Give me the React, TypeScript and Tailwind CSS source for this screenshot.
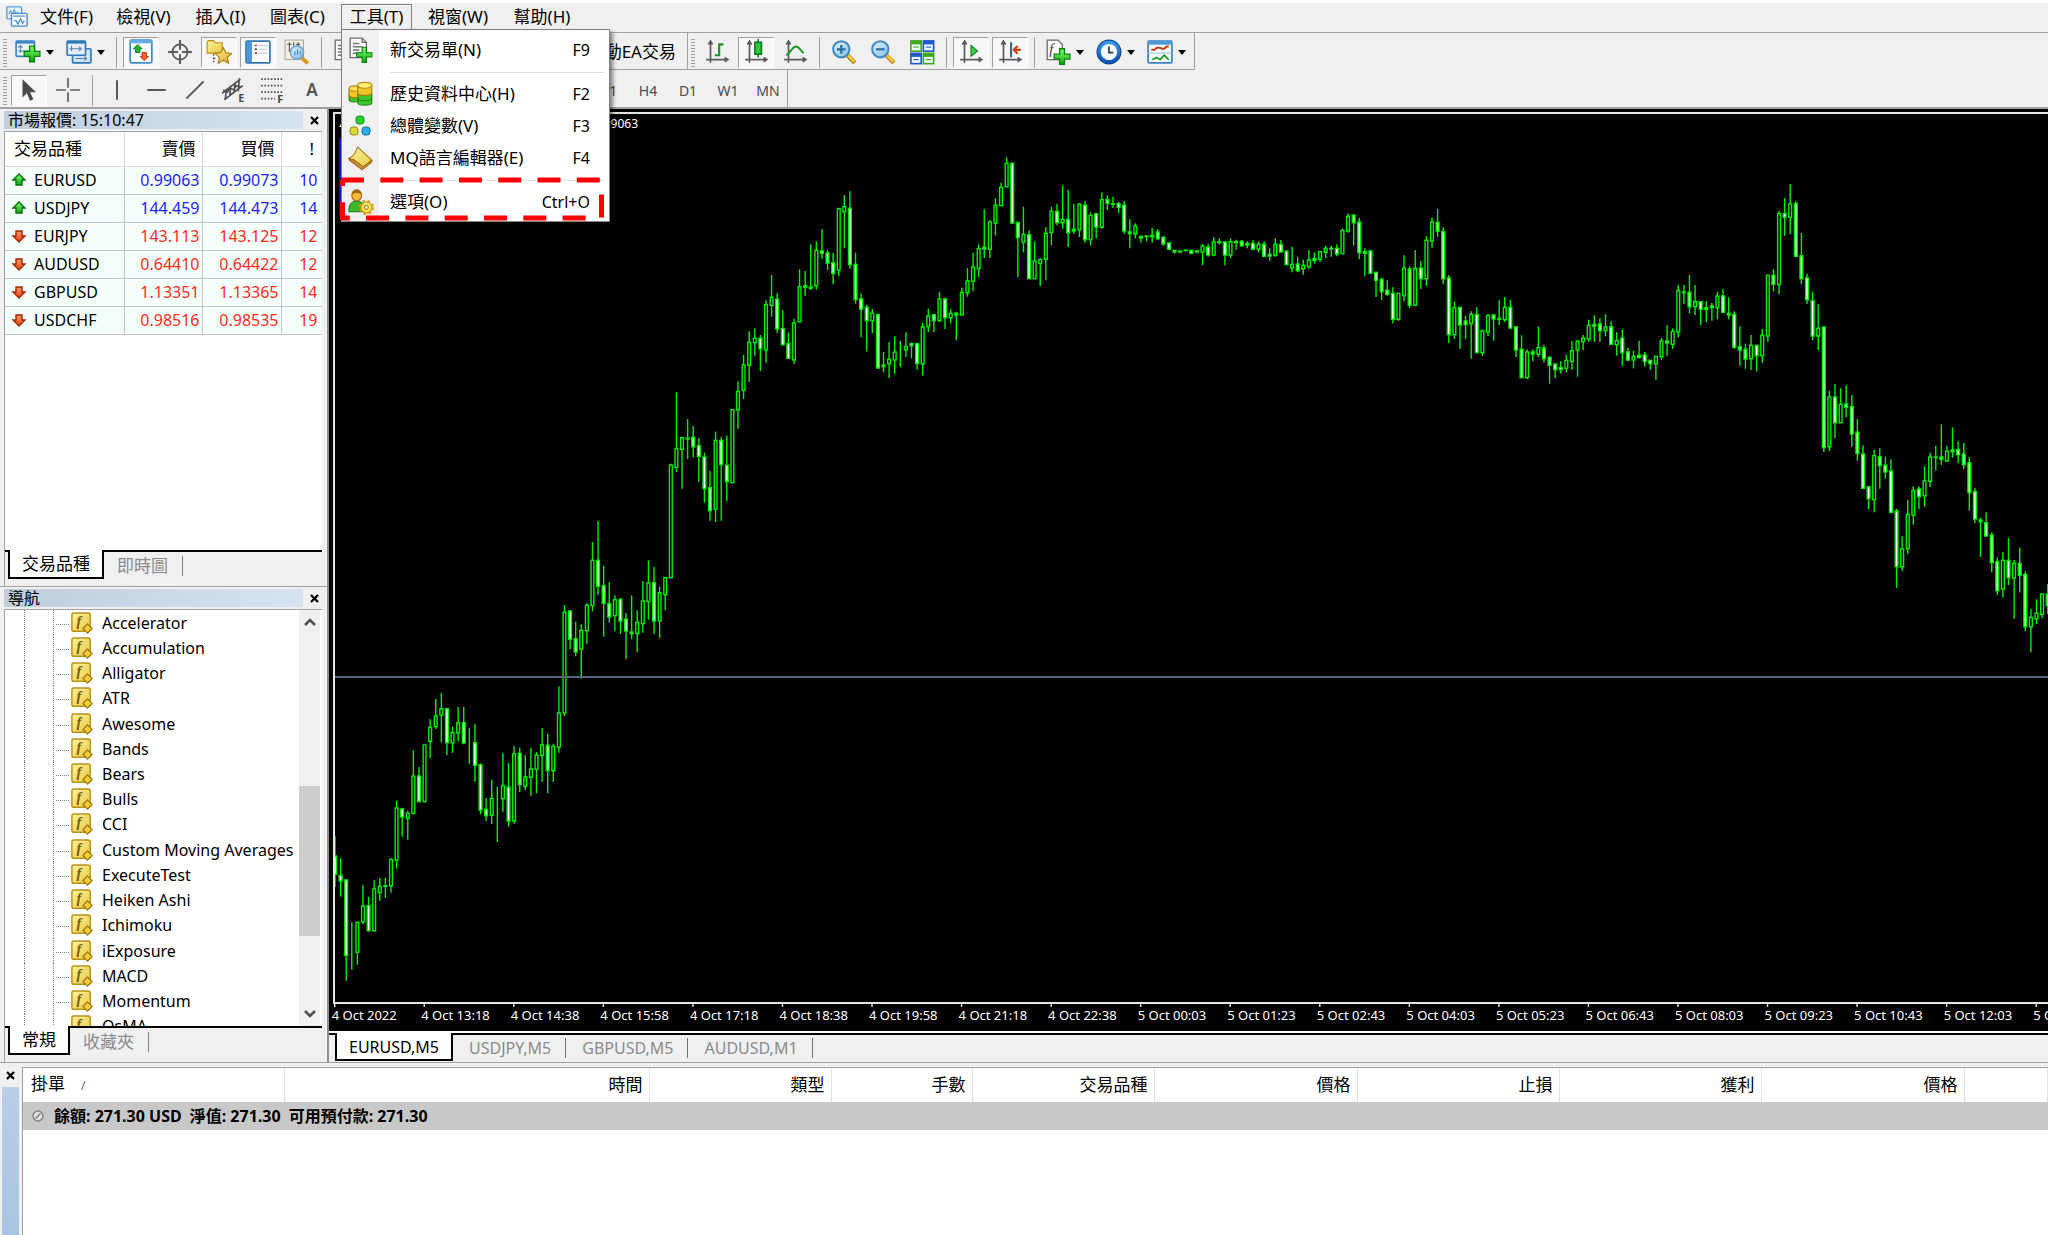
import React from "react";

/* ---------- chart data ---------- */
/* Each bar: high, body top, body bottom, low (thirds of a pixel below the block's origin), 1 = falling bar. */
type Block = { origin: number; bars: string };

const BLOCKS: Block[] = [
  {
    origin: 640,
    bars: `587,648,703,741,1 655,706,723,770,1 720,720,946,1022,1 847,937,937,989,0 845,847,937,975,0 735,798,846,853,0
771,797,872,875,1 721,747,872,875,0 713,739,758,782,0 713,737,739,773,0 655,658,737,758,0 482,504,660,686,0
503,507,531,590,1 512,520,535,599,0 331,408,520,523,0 381,408,485,485,1 315,315,485,485,0 238,262,304,355,0
176,228,260,267,0 159,206,225,308,0 206,206,308,346,1 259,278,308,339,0 201,248,279,304,0 201,248,309,313,1
264,307,307,372,0 252,308,376,426,1 370,374,510,523,1 474,508,527,543,1 419,475,526,552,0 440,475,475,606,0
340,437,476,515,0 369,441,543,560,1 319,341,543,551,0 323,340,434,456,1 344,411,439,451,0 323,387,412,468,0
336,345,388,460,0 264,315,346,426,0 281,316,392,460,1 311,319,392,426,0 139,219,321,338,0`,
  },
  {
    origin: 510,
    bars: `285,307,609,618,0 301,303,388,418,1 335,386,426,439,1 343,361,417,506,0 280,286,362,402,0 96,151,287,304,0
33,151,229,254,1 167,227,280,380,1 217,281,321,338,1 256,269,317,363,0 264,268,333,372,1 310,327,363,448,1
256,366,371,388,1 301,337,371,427,0 213,273,341,368,0 151,219,275,329,0 171,218,333,372,1 230,248,333,384,0
201,203,254,300,0`,
  },
  {
    origin: 180,
    bars: `851,855,1193,1195,0 637,806,862,876,0 771,773,808,926,0 717,774,777,837,1 738,772,800,832,1 775,797,829,905,1
818,831,926,968,1 872,923,992,1022,1 755,781,988,1026,0 771,781,854,1022,1 767,856,905,964,1 688,689,908,909,0
604,634,690,746,0 524,555,631,657,0 453,487,556,606,0 445,475,488,527,0 465,475,506,573,1 361,374,510,548,0
285,352,376,410,0 340,357,447,460,1 390,446,494,497,1 457,491,535,536,1 416,429,540,552,0 268,320,425,427,0
273,317,321,347,1 193,321,325,329,1 184,211,317,329,0 147,213,220,237,1 210,219,249,270,1 218,248,280,313,1
83,86,270,288,0 45,80,95,205,0 34,85,254,266,1 218,253,359,371,1 340,357,388,472,1 374,382,422,514,1
387,400,422,460,0 400,404,564,565,1 516,555,560,577,1 487,538,551,594,0 469,516,540,582,0 482,509,509,560,0
457,500,510,531,0 487,491,497,535,1 488,491,551,569,1 428,441,552,586,0 386,408,440,456,0 403,404,422,456,1
336,357,422,426,0 353,357,413,447,1 387,400,413,430,0 395,400,405,481,1 323,337,405,406,0 264,303,338,350,0
218,261,304,334,0 193,206,266,292,0 88,202,207,234,1 121,126,208,234,0 55,76,129,166,0 8,22,77,78,0
-68,-50,20,22,0 -53,-50,129,132,1 126,127,173,292,1 80,163,187,217,0 151,164,296,297,1 184,243,296,297,0
235,239,250,318,0 142,160,238,301,0 80,94,158,196,0 71,94,128,136,1`,
  },
  {
    origin: 140,
    bars: `136,238,248,266,0 149,238,278,321,1 191,268,273,281,1 190,192,270,291,0 183,196,299,308,1 217,226,299,317,0
220,221,261,295,1 157,179,262,266,0 166,179,190,211,1 170,191,193,204,1 186,191,202,219,1 183,196,273,282,1
238,276,281,325,1 250,258,282,295,0 288,289,294,308,1 287,288,290,304,0 263,286,290,308,1 267,276,296,300,1
288,292,312,317,1 308,309,328,329,1 330,331,336,341,1 329,334,336,337,0 330,330,332,332,0 330,331,340,342,1
329,333,336,337,0 312,318,336,376,0 312,321,345,350,1 292,306,345,346,0 295,305,308,313,0 304,306,345,376,1
295,305,345,354,0 299,305,308,329,0 300,304,317,320,1 304,310,315,325,1 300,310,328,329,1 304,313,328,337,0
304,313,349,350,1 325,343,348,362,1 295,313,346,350,0 300,313,336,337,1 330,334,374,375,1 320,373,384,397,0
350,372,392,396,1 359,376,387,404,0 330,360,380,387,0 338,355,361,371,1 333,335,358,366,0 317,325,337,354,0
317,325,327,350,0 313,325,342,349,1 266,271,341,342,0 220,229,273,278,0 224,225,248,317,1 233,246,338,358,1
325,335,340,409,1 329,333,400,401,1 396,397,421,471,1 413,418,455,480,1 421,451,463,467,1 442,460,538,550,1
459,460,538,543,0 346,385,467,484,0 379,387,496,504,1 330,385,496,497,0 363,384,416,447,1 288,301,416,438,0
233,246,303,325,0 207,247,274,291,1 262,275,416,433,1 405,414,584,609,1 484,503,584,597,0 501,502,555,627,1
527,543,554,597,1 514,523,551,656,0 501,523,638,639,1 568,573,638,648,0 522,527,576,588,0 522,525,537,602,1
480,535,538,555,0 471,502,539,546,0 480,502,564,568,1 559,560,630,652,1 586,628,713,714,1 628,636,713,718,0
628,636,642,664,1 559,623,643,652,0`,
  },
  {
    origin: 170,
    bars: `525,534,566,578,1 559,562,586,641,1 578,583,599,625,1 574,593,599,611,1 555,571,595,607,0 513,542,574,600,0
512,513,540,620,0 495,504,515,541,0 449,466,507,516,0 436,463,469,516,1 445,462,482,516,1 432,471,482,499,0
453,470,523,524,1 487,512,524,557,0 478,504,548,587,1 533,546,570,574,1 542,559,570,595,0 512,556,562,566,1
546,555,575,590,1 570,571,581,599,1 558,559,581,629,0 504,513,560,570,0 465,513,519,557,1 475,484,523,537,0
344,361,486,502,0 345,366,368,402,0 315,367,410,431,1 345,395,410,436,0 394,395,418,465,1 394,413,418,457,1
399,408,413,452,1 365,378,413,448,0 357,378,427,428,1 382,430,435,448,1 424,433,532,536,1 469,530,540,587,1
521,538,567,596,1 495,526,566,600,0 525,526,557,604,1 478,496,557,578,0 315,316,498,515,0 298,316,343,364,1
123,131,344,373,0 84,131,142,197,1 42,102,142,193,0 93,101,259,260,1 189,257,326,343,1 311,324,389,402,1
365,392,498,511,1 403,475,498,541,0 470,471,833,846,1 662,681,830,843,0 642,681,758,805,1 655,703,758,759,0
646,702,712,742,1 675,710,792,830,1 747,786,851,872,1 826,852,955,956,1 949,950,986,1018,1 839,857,989,1027,0
835,860,887,956,1 860,886,906,926,1 868,903,1027,1030,1 1016,1023,1190,1254,1 1099,1137,1190,1203,0 990,1033,1136,1152,0
949,961,1035,1064,0 949,957,980,1018,1 889,933,977,1010,0 848,861,934,951,0 827,861,863,901,0 763,861,868,885,1
827,844,873,875,0 772,840,845,863,1 814,839,854,880,1 818,852,884,897,1 861,878,968,1022,1 953,965,1047,1060,1
1042,1050,1055,1161,1 1027,1058,1098,1099,1 1087,1095,1178,1207,1 1162,1175,1262,1275,1 1146,1171,1257,1283,0
1103,1171,1223,1245,1 1170,1180,1224,1346,0 1133,1180,1216,1267,1 1204,1213,1370,1384,1 1317,1342,1370,1447,0
1288,1330,1346,1362,0 1271,1272,1333,1345,0 1242,1272,1307,1333,1`,
  },
];

const PLOT_TOP = 114;
const BAR_STEP = 5.597;

const BARS = BLOCKS.flatMap(({ origin, bars }) =>
  bars.split(/\s+/).map((bar) => {
    const [high, top, bottom, low, down] = bar.split(",").map(Number);
    const y = (v: number) => origin - PLOT_TOP + v / 3;
    return { high: y(high), top: y(top), bottom: y(bottom), low: y(low), down: down === 1 };
  }),
);

const TIMES = [
  "4 Oct 2022", "4 Oct 13:18", "4 Oct 14:38", "4 Oct 15:58", "4 Oct 17:18", "4 Oct 18:38", "4 Oct 19:58",
  "4 Oct 21:18", "4 Oct 22:38", "5 Oct 00:03", "5 Oct 01:23", "5 Oct 02:43", "5 Oct 04:03", "5 Oct 05:23",
  "5 Oct 06:43", "5 Oct 08:03", "5 Oct 09:23", "5 Oct 10:43", "5 Oct 12:03", "5 Oct 13:23",
];

/* ---------- icons ---------- */
type IconProps = { size?: number; children: React.ReactNode };
const Icon = ({ size = 26, children }: IconProps) => (
  <svg width={size} height={size} viewBox="0 0 24 24" fill="none" aria-hidden="true" className="shrink-0">
    {children}
  </svg>
);

const Defs = () => (
  <svg width="0" height="0" className="absolute" aria-hidden="true">
    <defs>
      <linearGradient id="green" x1="0" y1="0" x2="0" y2="1">
        <stop offset="0" stopColor="#7dff6a" />
        <stop offset="1" stopColor="#0aa814" />
      </linearGradient>
      <linearGradient id="gold" x1="0" y1="0" x2="1" y2="1">
        <stop offset="0" stopColor="#fff6a8" />
        <stop offset="1" stopColor="#dfa514" />
      </linearGradient>
      <linearGradient id="leaf" x1="0" y1="0" x2="1" y2="1">
        <stop offset="0" stopColor="#fdf3a0" />
        <stop offset="1" stopColor="#e9c840" />
      </linearGradient>
      <linearGradient id="lens" x1="0" y1="0" x2="1" y2="1">
        <stop offset="0" stopColor="#e8f6ff" />
        <stop offset="1" stopColor="#7fbde8" />
      </linearGradient>
      <linearGradient id="blue" x1="0" y1="0" x2="0" y2="1">
        <stop offset="0" stopColor="#3aa0f4" />
        <stop offset="1" stopColor="#0a4fae" />
      </linearGradient>
      <linearGradient id="red" x1="0" y1="0" x2="0" y2="1">
        <stop offset="0" stopColor="#ff9a6a" />
        <stop offset="1" stopColor="#e03a08" />
      </linearGradient>
    </defs>
  </svg>
);

const PLUS = "M13 9.500h4v5h5v4h-5v5h-4v-5h-5v-4h5z";
const Plus = () => <path d={PLUS} fill="url(#green)" stroke="#07820f" />;
const BIG_PLUS = "M13.500 6.500h4.500v5h5v4.500h-5v5h-4.500v-5h-5v-4.500h5z";

const AppLogo = () => (
  <Icon size={22}>
    <rect x="1" y="1" width="16" height="13" rx="1" fill="#eaf4fd" stroke="#5b9bd8" strokeWidth="1.500" />
    <path d="M3 9l2-4 2 5 2-6 2 5 2-3" stroke="#5b9bd8" strokeWidth="1.300" />
    <rect x="6" y="8" width="17" height="14" rx="1" fill="#f4faff" stroke="#4a8cd0" strokeWidth="1.500" />
    <path d="M8 11h13" stroke="#4a8cd0" strokeWidth="1.300" />
    <path d="M9 16h2l2 4 3-6 2 5 2-3" stroke="#4a8cd0" strokeWidth="1.400" />
  </Icon>
);
const NewChart = () => (
  <Icon>
    <rect x="1" y="2" width="17" height="14" rx="1" fill="#e9f4fc" stroke="#3c84c4" strokeWidth="1.500" />
    <path d="M1 3h17" stroke="#3c84c4" strokeWidth="2.500" />
    <path d="M5 6v7M3 8l2-2 2 2M3 11h11" stroke="#5580a8" />
    <path d={BIG_PLUS} fill="url(#green)" stroke="#07820f" strokeWidth="1.200" />
  </Icon>
);
const Profiles = () => (
  <Icon>
    <rect x="6" y="9" width="17" height="13" rx="1" fill="#cfe4f6" stroke="#2f78b8" strokeWidth="1.500" />
    <path d="M9 18h10M17 16l2 2-2 2" stroke="#5580a8" />
    <rect x="1" y="2" width="17" height="13" rx="1" fill="#e3f0fb" stroke="#2f78b8" strokeWidth="1.500" />
    <path d="M1 3h17" stroke="#2f78b8" strokeWidth="2.500" />
    <path d="M5 6v5M3 9h11M12 7l2 2-2 2" stroke="#5580a8" />
  </Icon>
);
const MarketWatchIcon = () => (
  <Icon>
    <rect x="2" y="1" width="20" height="21" rx="1.500" fill="#fdfeff" stroke="#3c8ccc" strokeWidth="1.600" />
    <path d="M2 2.500h20" stroke="#62aee6" strokeWidth="3" />
    <path d="M9 5l4 4h-2v3.500H7V9H5z" fill="#28b428" stroke="#0b7a10" strokeWidth=".8" />
    <path d="M15 20l-4-4h2v-3.500h4V16h2z" fill="#f4602a" stroke="#b83208" strokeWidth=".8" />
  </Icon>
);
const Crosshair = () => (
  <Icon>
    <circle cx="12" cy="12" r="7" stroke="#5a5a5a" strokeWidth="1.600" />
    <path d="M12 1v9M12 14v9M1 12h9M14 12h9" stroke="#5a5a5a" strokeWidth="1.800" />
  </Icon>
);
const FolderStar = () => (
  <Icon>
    <path d="M1 3.500l1-2h5l1.500 2H15V13H1z" fill="url(#leaf)" stroke="#b98a12" />
    <path d="M7 14v8M7 18h3" stroke="#444" strokeWidth="1.300" strokeDasharray="1.500 1.500" />
    <path d="M16 8l2.400 4.800 5.200.6-3.900 3.600 1.100 5.300L16 19.700l-4.800 2.600 1.100-5.300-3.900-3.600 5.200-.6z" fill="url(#gold)" stroke="#a87808" />
  </Icon>
);
const NavigatorIcon = () => (
  <Icon>
    <rect x="1" y="2" width="22" height="20" rx="1" fill="#fff" stroke="#2f78b8" strokeWidth="1.600" />
    <rect x="1.500" y="2.500" width="5" height="19" fill="#4b98d8" />
    <path d="M9 6h2M9 13h2" stroke="#e02020" strokeWidth="1.600" />
    <path d="M9 9.500h2" stroke="#333" strokeWidth="1.600" />
    <path d="M12.500 6H21M12.500 9.500H21M12.500 13H21" stroke="#c4d8ea" strokeWidth="1.200" />
  </Icon>
);
const Tester = () => (
  <Icon>
    <rect x="1" y="1" width="17" height="18" fill="#f2efe6" stroke="#b4aa94" />
    <path d="M5 3v9M3 5h4M9 3v5M13 3v6M11 5h4" stroke="#666" strokeWidth="1.200" />
    <path d="M16 17l6 5.500" stroke="#d59a12" strokeWidth="3.500" />
    <circle cx="12" cy="12.500" r="6" fill="url(#lens)" stroke="#6ba4cf" strokeWidth="1.500" />
    <path d="M10 11v4M12.500 9.500v5M15 11v3" stroke="#4a86b4" />
  </Icon>
);
const NewOrder = () => (
  <Icon>
    <path d="M2 1h11l4 4v14H2z" fill="#fbfbfb" stroke="#6a6a6a" strokeWidth="1.200" />
    <path d="M13 1v4h4" stroke="#6a6a6a" strokeWidth="1.200" />
    <path d="M4.500 6h6M4.500 9h9M4.500 12h6M4.500 15h4" stroke="#777" strokeWidth="1.500" />
    <Plus />
  </Icon>
);
const Axes = () => (
  <path d="M6 2v20M2 19h20M4 5l2-3 2 3M19 17l3 2-3 2" stroke="#5c5c5c" strokeWidth="1.600" />
);
const BarsIcon = () => (
  <Icon>
    <Axes />
    <path d="M14 4v12M14 5h4M10 15h4" stroke="#149420" strokeWidth="2" />
  </Icon>
);
const CandlesIcon = () => (
  <Icon>
    <Axes />
    <path d="M14 0v17" stroke="#0c7a18" strokeWidth="1.500" />
    <rect x="11" y="3" width="6" height="11" fill="#30c840" stroke="#0c7a18" strokeWidth="1.500" />
  </Icon>
);
const LineIcon = () => (
  <Icon>
    <Axes />
    <path d="M4 15c4-3 6-8 9-8s4 4 7 6" stroke="#149420" strokeWidth="1.800" />
  </Icon>
);
const ZoomIcon = ({ plus }: { plus?: boolean }) => (
  <Icon>
    <path d="M15 15l7 7" stroke="#b98508" strokeWidth="4" />
    <path d="M15.500 15l6 6" stroke="#f6d24a" strokeWidth="2" />
    <circle cx="9.500" cy="9.500" r="7.500" fill="url(#lens)" stroke="#3f85c0" strokeWidth="1.800" />
    <path d={plus ? "M5.500 9.500h8M9.500 5.500v8" : "M5.500 9.500h8"} stroke="#2c6a9e" strokeWidth="2" />
  </Icon>
);
const TileIcon = () => (
  <Icon>
    {[
      [1, 1, "#3fa81c"],
      [12.5, 1, "#2458c8"],
      [1, 12.5, "#2458c8"],
      [12.5, 12.5, "#3fa81c"],
    ].map(([x, y, c]) => (
      <g key={`${x}-${y}`} transform={`translate(${x} ${y})`}>
        <rect width="11" height="11" fill={c as string} />
        <rect x="1.500" y="4" width="8" height="5.500" fill="#eef6ff" />
        <path d="M3 6.500h5" stroke={c as string} />
      </g>
    ))}
  </Icon>
);
const AutoScroll = () => (
  <Icon>
    <Axes />
    <path d="M12 6l6 5-6 5z" fill="#3fd04c" stroke="#0c7a18" />
  </Icon>
);
const ShiftIcon = () => (
  <Icon>
    <Axes />
    <path d="M13 3v14" stroke="#44648a" strokeWidth="2" />
    <path d="M22 10h-6M19 6.500L15.500 10l3.500 3.500" stroke="#c8420e" strokeWidth="2" />
  </Icon>
);
const IndicatorsIcon = () => (
  <Icon>
    <path d="M2 1h10l4 4v14H2z" fill="#fbfbfb" stroke="#6a6a6a" strokeWidth="1.200" />
    <text x="4" y="14" fontSize="13" fontStyle="italic" fontFamily="Liberation Serif, serif" fill="#333">f</text>
    <path d={BIG_PLUS} transform="translate(0 2.500)" fill="url(#green)" stroke="#07820f" strokeWidth="1.200" />
  </Icon>
);
const ClockIcon = () => (
  <Icon>
    <circle cx="12" cy="12" r="11" fill="url(#blue)" stroke="#0a3f8c" />
    <circle cx="12" cy="12" r="7.500" fill="#f2f8ff" />
    <path d="M12 7v5.500h4" stroke="#333" strokeWidth="1.600" />
  </Icon>
);
const TemplateIcon = () => (
  <Icon>
    <rect x="1" y="2" width="22" height="20" rx="1" fill="#f8fbfe" stroke="#3c84c4" strokeWidth="1.600" />
    <path d="M1 3.500h22" stroke="#4b98d8" strokeWidth="3.500" />
    <path d="M4 10h3l2-2h3l2 1h2l2-2h2" stroke="#b83a10" strokeWidth="1.800" />
    <path d="M1 13h22" stroke="#9cc4e6" />
    <path d="M5 19l4-2 3 2 4-4 4 4" stroke="#149420" strokeWidth="1.500" />
  </Icon>
);
const Cursor = () => (
  <Icon>
    <path d="M6 2v17l4-4 3 7 3-1.500-3-6.500h5.500z" fill="#4a4a4a" />
  </Icon>
);
const Cross = () => (
  <Icon>
    <path d="M12 1v9M12 14v9M1 12h9M14 12h9" stroke="#5a5a5a" strokeWidth="1.500" />
  </Icon>
);
const Stroke = ({ d }: { d: string }) => (
  <Icon>
    <path d={d} stroke="#555" strokeWidth="1.800" />
  </Icon>
);
const Channel = () => (
  <Icon>
    <path d="M1 15L18 2M3 21L20 8M5 11l-1 9M9 8l-1 10M13 5l-1 10M17 1l-1 12M2 12l4 2 2-4 4 2 2-4 4 1" stroke="#505050" strokeWidth="1.500" />
    <text x="16" y="23" fontSize="10" fontWeight="700" fontFamily="Noto Sans, sans-serif" fill="#444">E</text>
  </Icon>
);
const Fibo = () => (
  <Icon>
    <path d="M1 2h21M1 8h21M1 14h21M1 20h13" stroke="#555" strokeWidth="1.500" strokeDasharray="1.500 1.500" />
    <text x="16" y="24" fontSize="10" fontWeight="700" fontFamily="Noto Sans, sans-serif" fill="#444">F</text>
  </Icon>
);
const Database = () => (
  <Icon>
    <path d="M9 12v8c0 3 13 3 13 0v-8z" fill="#3fc62c" stroke="#1c8412" />
    <path d="M9 16c0 3 13 3 13 0" stroke="#1c8412" />
    <path d="M1 13v4c0 2 4 3 8 2v-6z" fill="#3fc62c" stroke="#1c8412" />
    <path d="M1 7v6c0 2 4 3 8 2V7z" fill="#f0c626" stroke="#a87808" />
    <ellipse cx="7" cy="7" rx="6" ry="2.500" fill="#ffe95a" stroke="#b98a12" />
    <path d="M9 4v7c0 3 13 3 13 0V4z" fill="#f0c626" stroke="#a87808" />
    <ellipse cx="15.500" cy="4" rx="6.500" ry="2.700" fill="#fff07a" stroke="#b98a12" />
  </Icon>
);
const Globals = () => (
  <Icon size={24}>
    <rect x="8" y="2" width="8" height="8" rx="3" fill="#22d622" stroke="#0c8a18" />
    <rect x="2" y="13" width="8" height="8" rx="3" fill="#d8d83c" stroke="#8c8c14" />
    <rect x="14" y="13" width="8" height="8" rx="3" fill="#2ab0e8" stroke="#126a9c" />
  </Icon>
);
const Editor = () => (
  <Icon>
    <path d="M9 2l13 12-9 8L1 12c3 0 6-5 8-10z" fill="url(#leaf)" stroke="#a4701a" />
    <path d="M1 12c1 2 2 2 4 1l9 7 8-6v2l-9 7L1 14z" fill="#c98a2c" stroke="#8c5a10" strokeWidth=".8" />
  </Icon>
);
const Options = () => (
  <Icon>
    <path d="M1 21c-1-7 3-10 7-10s8 3 7 10z" fill="#3fb82c" stroke="#1c7a12" />
    <ellipse cx="8" cy="6" rx="4.500" ry="5" fill="#f4b83c" stroke="#9c6408" />
    <path d="M3.500 5c0-6 9-6 9 0-3-2-6-2-9 0z" fill="#a0620c" />
    <circle cx="17" cy="17" r="5.800" stroke="#d49c10" strokeWidth="2.400" strokeDasharray="2.300 2.300" />
    <circle cx="17" cy="17" r="5" fill="#ffe860" stroke="#c89810" strokeWidth="1" />
    <circle cx="17" cy="17" r="1.800" fill="#fff" stroke="#a87808" />
  </Icon>
);
const FnIcon = () => (
  <Icon size={22}>
    <rect x="1" y="1" width="20" height="20" rx="2" fill="url(#leaf)" stroke="#b8921c" strokeWidth="1.600" />
    <text x="6" y="15" fontSize="16" fontWeight="700" fontStyle="italic" fontFamily="Liberation Serif, serif" fill="#7a5a08">f</text>
    <path d="M18 13l5 5-5 5-5-5z" fill="#f6cc3a" stroke="#9c7408" strokeWidth="1.300" />
  </Icon>
);
const Trend = ({ up }: { up: boolean }) => (
  <svg width="16" height="14" viewBox="0 0 16 14" aria-hidden="true" className="shrink-0">
    <path
      d={up ? "M8 1l6 6h-3v5H5V7H2z" : "M8 13L2 7h3V2h6v5h3z"}
      fill={up ? "url(#green)" : "url(#red)"}
      stroke={up ? "#0a6a10" : "#9c2a06"}
      strokeWidth="1.400"
    />
  </svg>
);

/* ---------- toolbar pieces ---------- */
const Grip = () => (
  <span className="mr-px ml-[3px] h-[30px] w-1 bg-[repeating-linear-gradient(0deg,#9d9d9d_0_1px,#f0f0f0_1px_3px)]" />
);
const Rule = () => <span className="mx-[3px] h-[31px] w-px bg-[#a0a0a0]" />;

const Tool = ({ label, pressed, children }: { label: string; pressed?: boolean; children: React.ReactNode }) => (
  <button
    type="button"
    aria-label={label}
    aria-pressed={pressed}
    className={
      pressed
        ? "flex h-[31px] w-9 shrink-0 items-center justify-center border border-t-[#a0a0a0] border-r-white border-b-white border-l-[#a0a0a0] bg-[#f8f8f8]"
        : "flex h-[31px] w-9 shrink-0 items-center justify-center"
    }
  >
    {children}
  </button>
);
const DropTool = ({ label, children }: { label: string; children: React.ReactNode }) => (
  <button type="button" aria-label={label} className="flex h-[31px] w-12 shrink-0 items-center gap-[5px] pl-1">
    {children}
    <svg width="8" height="5" viewBox="0 0 8 5" aria-hidden="true">
      <path d="M0 0h8L4 5z" fill="#000" />
    </svg>
  </button>
);

/* ---------- menu ---------- */
const MenuItem = ({ icon, label, keys }: { icon: React.ReactNode; label: string; keys: string }) => (
  <button type="button" role="menuitem" className="flex h-8 w-full items-center pr-[19px] pl-[6px]">
    <span className="w-[42px]">{icon}</span>
    <span className="flex-1 text-left">{label}</span>
    <span className="text-[16px]">{keys}</span>
  </button>
);
const MenuRule = () => (
  <div className="flex h-3 items-center pr-1 pl-12">
    <span className="h-px w-full bg-[#e2e2e2]" />
  </div>
);

const ToolsMenu = () => (
  <div
    role="menu"
    className="absolute top-full -left-px z-20 w-[269px] border border-[#808080] bg-[linear-gradient(to_right,#f0f0f0_37px,#fff_37px)] pt-1 pb-[3px] shadow-[3px_3px_4px_rgba(0,0,0,0.45)]"
  >
    <MenuItem icon={<NewOrder />} label="新交易單(N)" keys="F9" />
    <MenuRule />
    <MenuItem icon={<Database />} label="歷史資料中心(H)" keys="F2" />
    <MenuItem icon={<Globals />} label="總體變數(V)" keys="F3" />
    <MenuItem icon={<Editor />} label="MQ語言編輯器(E)" keys="F4" />
    <MenuRule />
    <MenuItem icon={<Options />} label="選項(O)" keys="Ctrl+O" />
    <svg className="pointer-events-none absolute bottom-0 -left-[2px]" width="266" height="44" aria-hidden="true">
      <path d="M1 3H261.500V41H2.500V3" fill="none" stroke="#f00" strokeWidth="5" strokeDasharray="23 16.300" />
    </svg>
  </div>
);

const MenuBar = () => (
  <nav className="mb-[2px] flex h-[27px] shrink-0 items-center pl-[6px] text-[17px] leading-5">
    <AppLogo />
    {["文件(F)", "檢視(V)", "插入(I)", "圖表(C)"].map((m) => (
      <button key={m} type="button" className="min-w-[77px]">
        {m}
      </button>
    ))}
    <div className="relative mt-px mr-1 ml-[5px] flex h-[25px] w-[71px] justify-center self-start border border-b-0 border-[#808080]">
      <button type="button" aria-expanded="true">工具(T)</button>
      <ToolsMenu />
    </div>
    {["視窗(W)", "幫助(H)"].map((m) => (
      <button key={m} type="button" className="min-w-[84px]">
        {m}
      </button>
    ))}
  </nav>
);

/* ---------- side panels ---------- */
const QUOTES = [
  ["EURUSD", "0.99063", "0.99073", "10", true],
  ["USDJPY", "144.459", "144.473", "14", true],
  ["EURJPY", "143.113", "143.125", "12", false],
  ["AUDUSD", "0.64410", "0.64422", "12", false],
  ["GBPUSD", "1.13351", "1.13365", "14", false],
  ["USDCHF", "0.98516", "0.98535", "19", false],
] as const;

const INDICATORS = [
  "Accelerator", "Accumulation", "Alligator", "ATR", "Awesome", "Bands", "Bears", "Bulls", "CCI",
  "Custom Moving Averages", "ExecuteTest", "Heiken Ashi", "Ichimoku", "iExposure", "MACD", "Momentum", "OsMA",
];

const CloseButton = ({ label }: { label: string }) => (
  <button type="button" aria-label={label} className="flex w-4 items-center justify-center">
    <svg width="9" height="9" viewBox="0 0 9 9" aria-hidden="true">
      <path d="M1 1l7 7M8 1L1 8" stroke="#000" strokeWidth="2.200" />
    </svg>
  </button>
);

const PanelTitle = ({ text }: { text: string }) => (
  <header className="flex h-[22px] shrink-0 items-center justify-between">
    <h2 className="flex h-[18px] w-[299px] items-center bg-linear-to-r from-[#bfcddc] to-[#d6e4f2] pl-1 text-[16px] leading-4">
      {text}
    </h2>
    <CloseButton label={`關閉 ${text}`} />
  </header>
);

const Tabs = ({ active, other }: { active: string; other: string }) => (
  <div role="tablist" className="flex h-[30px] shrink-0 items-start border-t-2 border-black pl-[3px] text-[17px] leading-6">
    <button type="button" role="tab" aria-selected="true" className="-mt-[2px] h-[29px] border-2 border-t-0 border-black bg-white px-3">
      {active}
    </button>
    <button type="button" role="tab" aria-selected="false" className="mt-1 ml-[5px] border-r border-[#808080] px-2 pr-[14px] leading-5 text-[#8a8a8a]">
      {other}
    </button>
  </div>
);

const MarketWatch = () => (
  <section className="flex h-[477px] shrink-0 flex-col pr-[5px] pl-1">
    <PanelTitle text="市場報價: 15:10:47" />
    <div className="flex-1 border-t border-l border-[#a0a0a0] bg-white">
      <table className="w-full table-fixed border-collapse text-[16px] leading-5">
        <colgroup>
          <col className="w-[119px]" />
          <col className="w-[78px]" />
          <col className="w-[79px]" />
          <col />
        </colgroup>
        <thead>
          <tr className="h-[34px] text-[17px] [&>th]:border-r [&>th]:border-b [&>th]:border-[#dcdcdc] [&>th]:font-normal">
            <th className="pl-[9px] text-left">交易品種</th>
            <th className="pr-[6px] text-right">賣價</th>
            <th className="pr-[6px] text-right">買價</th>
            <th className="pr-[7px] text-right">!</th>
          </tr>
        </thead>
        <tbody>
          {QUOTES.map(([symbol, bid, ask, spread, up]) => (
            <tr
              key={symbol}
              className={
                up
                  ? "h-7 bg-[#f5fffa] text-[#1c1cff] [&>td]:border [&>td]:border-[#c4c4c4]"
                  : "h-7 bg-[#f5fffa] text-[#ff2a1c] [&>td]:border [&>td]:border-[#c4c4c4]"
              }
            >
              <td className="border-l-0! pl-[6px] text-black">
                <span className="flex items-center gap-[7px]">
                  <Trend up={up} />
                  {symbol}
                </span>
              </td>
              <td className="pr-[2px] text-right">{bid}</td>
              <td className="pr-[2px] text-right">{ask}</td>
              <td className="border-r-0! pr-1 text-right">{spread}</td>
            </tr>
          ))}
        </tbody>
      </table>
    </div>
    <div className="border-l border-[#a0a0a0] pb-[6px]">
      <Tabs active="交易品種" other="即時圖" />
    </div>
  </section>
);

const Chevron = ({ d }: { d: string }) => (
  <svg width="12" height="8" viewBox="0 0 12 8" fill="none" aria-hidden="true">
    <path d={d} stroke="#505050" strokeWidth="2.600" />
  </svg>
);

const Navigator = () => (
  <section className="flex min-h-0 flex-1 flex-col border-t border-[#a0a0a0] pr-[5px] pl-1">
    <PanelTitle text="導航" />
    <div className="flex min-h-0 flex-1 overflow-hidden border-t border-l border-[#a0a0a0] bg-white">
      <ul className="flex h-[429px] flex-1 flex-col pl-[19px] text-[16px] leading-5">
        {INDICATORS.map((name) => (
          <li key={name} className="flex flex-1 items-center border-l border-dotted border-[#808080] pl-7 whitespace-nowrap">
            <span className="flex items-center self-stretch border-l border-dotted border-[#808080]">
              <span className="mt-[3px] mr-[2px] ml-[2px] w-[13px] border-t border-dotted border-[#808080]" />
              <FnIcon />
            </span>
            <span className="ml-[9px]">{name}</span>
          </li>
        ))}
      </ul>
      <div className="flex w-[21px] shrink-0 flex-col items-center bg-[#f0f0f0] py-2">
        <Chevron d="M1 7l5-5 5 5" />
        <span className="mt-[160px] h-[150px] w-full bg-[#cdcdcd]" />
        <span className="flex-1" />
        <Chevron d="M1 1l5 5 5-5" />
      </div>
      <span className="w-[2px]" />
    </div>
    <div className="border-l border-[#a0a0a0] pb-[6px]">
      <Tabs active="常規" other="收藏夾" />
    </div>
  </section>
);

/* ---------- chart ---------- */
const Chart = () => (
  <div className="flex min-h-0 flex-1 flex-col bg-black pt-[3px] text-white">
    <div className="relative ml-1 min-h-0 flex-1 overflow-hidden border-t-2 border-l-2 border-[#e4e4e4]">
      <svg className="absolute inset-0 h-full w-full" role="img" aria-label="EURUSD,M5">
        <g>
          {BARS.map((b, i) => {
            const x = BAR_STEP * i;
            const h = b.bottom - b.top;
            return (
              <g key={i} stroke="#00f000" strokeWidth="1.400">
                <path d={`M${x} ${b.high}V${b.low}`} />
                <rect x={x - 1.4} y={b.top} width="2.800" height={h} fill={b.down ? "#fff" : "#000"} />
              </g>
            );
          })}
        </g>
        <path d="M0 563H4000" stroke="#56677a" strokeWidth="2" />
      </svg>
      <div className="absolute top-0 left-0 flex w-[303px] items-center justify-between pl-1 text-[12px] leading-5">
        <svg width="8" height="6" viewBox="0 0 8 6" aria-hidden="true">
          <path d="M4 0l4 6H0z" fill="#fff" />
        </svg>
        <span>EURUSD,M5 0.99063 0.99065 0.99060 0.99063</span>
      </div>
      <div className="absolute top-6 left-1 h-[78px] w-[200px] bg-[#1010d0]" />
    </div>
    <svg className="h-[29px] w-full shrink-0" aria-hidden="true">
      <path d="M4 1H4000" stroke="#e4e4e4" strokeWidth="2" />
      {TIMES.map((t, i) => (
        <g key={t} transform={`translate(${5.7 + i * BAR_STEP * 16} 0)`}>
          <path d="M0 0V5" stroke="#e4e4e4" strokeWidth="1.400" />
          <text x="-3" y="18" fontSize="13" fill="#fff">
            {t}
          </text>
        </g>
      ))}
    </svg>
  </div>
);

const ChartTabs = () => (
  <div className="shrink-0 border-t-2 border-white">
    <div role="tablist" className="flex h-[29px] items-start border-t-2 border-black pl-[6px] text-[16px] leading-6">
      <button type="button" role="tab" aria-selected="true" className="-mt-[2px] h-7 w-[118px] border-2 border-t-0 border-black bg-white pt-px">
        EURUSD,M5
      </button>
      {["USDJPY,M5", "GBPUSD,M5", "AUDUSD,M1"].map((t) => (
        <button key={t} type="button" role="tab" aria-selected="false" className="mt-[3px] border-r border-[#707070] pr-[14px] pl-4 leading-5 text-[#8a8a8a]">
          {t}
        </button>
      ))}
    </div>
  </div>
);

/* ---------- terminal ---------- */
const HEADS = ["時間", "類型", "手數", "交易品種", "價格", "止損", "獲利", "價格"];

const Terminal = () => (
  <section className="flex h-[168px] shrink-0">
    <div className="flex w-[22px] shrink-0 flex-col pr-[3px] pl-[2px]">
      <div className="flex h-5 items-start pt-1">
        <CloseButton label="關閉終端" />
      </div>
      <span className="flex-1 bg-linear-to-b from-[#b9cfe8] to-[#a9c3e2]" />
    </div>
    <div className="flex-1 border-t border-l border-[#a0a0a0] bg-white">
      <table className="w-full table-fixed border-collapse text-[17px] leading-5">
        <colgroup>
          <col className="w-[261px]" />
          <col className="w-[365px]" />
          <col className="w-[182px]" />
          <col className="w-[141px]" />
          <col className="w-[182px]" />
          <col className="w-[203px]" />
          <col className="w-[202px]" />
          <col className="w-[202px]" />
          <col className="w-[203px]" />
          <col />
        </colgroup>
        <thead>
          <tr className="h-[34px] [&>th]:border-r [&>th]:border-[#e2e2e2] [&>th]:font-normal">
            <th className="pl-2 text-left">
              掛單<span className="ml-4 text-[12px] text-[#606060]">/</span>
            </th>
            {HEADS.map((h, i) => (
              <th key={i} className="pr-[6px] text-right">
                {h}
              </th>
            ))}
            <th aria-label="備註" />
          </tr>
        </thead>
        <tbody>
          <tr className="h-7 bg-[#c8c8c8] text-[16px] font-bold">
            <td colSpan={10}>
              <span className="flex items-center pl-[9px]">
                <svg width="12" height="12" viewBox="0 0 12 12" fill="none" aria-hidden="true">
                  <circle cx="6" cy="6" r="5" fill="#dedede" stroke="#808080" strokeWidth="1.400" />
                  <path d="M3.500 8.500l5-5" stroke="#808080" strokeWidth="1.400" />
                </svg>
                <span className="ml-[10px]">餘額: 271.30 USD</span>
                <span className="ml-2">淨值: 271.30</span>
                <span className="ml-2">可用預付款: 271.30</span>
              </span>
            </td>
          </tr>
        </tbody>
      </table>
    </div>
  </section>
);

export default function App() {
  return (
    <div className="flex h-screen flex-col overflow-hidden bg-[#f0f0f0] font-['Noto_Sans','Noto_Sans_CJK_TC',sans-serif] text-black">
      <Defs />
      <div className="h-[3px] shrink-0 bg-white" />
      <MenuBar />

      <div className="flex h-[38px] shrink-0 border-t border-[#a0a0a0]">
        <div className="flex w-[688px] items-center gap-[3px] border-r border-b border-[#a0a0a0] pt-[2px]">
          <Grip />
          <DropTool label="新圖表"><NewChart /></DropTool>
          <DropTool label="範本組合"><Profiles /></DropTool>
          <Rule />
          <Tool label="市場報價" pressed><MarketWatchIcon /></Tool>
          <Tool label="數據視窗"><Crosshair /></Tool>
          <Tool label="導航" pressed><FolderStar /></Tool>
          <Tool label="終端" pressed><NavigatorIcon /></Tool>
          <Tool label="策略測試"><Tester /></Tool>
          <Rule />
          <Tool label="新訂單"><NewOrder /></Tool>
          <button type="button" className="mr-[11px] ml-auto text-[17px] leading-5">自動EA交易</button>
        </div>
        <div className="flex items-center gap-[3px] border-r border-b border-[#a0a0a0] pt-[2px] pr-[3px]">
          <Grip />
          <Tool label="柱狀圖"><BarsIcon /></Tool>
          <Tool label="陰陽燭" pressed><CandlesIcon /></Tool>
          <Tool label="折線圖"><LineIcon /></Tool>
          <Rule />
          <Tool label="放大"><ZoomIcon plus /></Tool>
          <Tool label="縮小"><ZoomIcon /></Tool>
          <Tool label="並排視窗"><TileIcon /></Tool>
          <Rule />
          <Tool label="自動捲動" pressed><AutoScroll /></Tool>
          <Tool label="圖表平移" pressed><ShiftIcon /></Tool>
          <Rule />
          <DropTool label="技術指標"><IndicatorsIcon /></DropTool>
          <DropTool label="週期"><ClockIcon /></DropTool>
          <DropTool label="範本"><TemplateIcon /></DropTool>
        </div>
      </div>

      <div className="flex h-[39px] shrink-0 border-b-2 border-[#a0a0a0]">
        <div className="flex w-[788px] items-center gap-[3px] border-r border-[#a0a0a0] pt-[3px] text-[14px] text-[#4a4a4a]">
          <Grip />
          <Tool label="游標" pressed><Cursor /></Tool>
          <Tool label="十字線"><Cross /></Tool>
          <Rule />
          <Tool label="垂直線"><Stroke d="M12 3v18" /></Tool>
          <Tool label="水平線"><Stroke d="M4 12h17" /></Tool>
          <Tool label="趨勢線"><Stroke d="M4 20L20 4" /></Tool>
          <Tool label="等距通道"><Channel /></Tool>
          <Tool label="斐波那契"><Fibo /></Tool>
          <button type="button" className="w-9 text-[17px] font-semibold text-[#555]">A</button>
          <div className="ml-auto flex gap-[2px]">
            {["H1", "H4", "D1", "W1", "MN"].map((t) => (
              <button key={t} type="button" className="w-[38px]">
                {t}
              </button>
            ))}
          </div>
        </div>
      </div>

      <div className="flex min-h-0 flex-1">
        <aside className="flex w-[329px] shrink-0 flex-col border-r-2 border-[#909090]">
          <MarketWatch />
          <Navigator />
        </aside>
        <main className="flex min-w-0 flex-1 flex-col">
          <Chart />
          <ChartTabs />
        </main>
      </div>
      <div className="h-[5px] shrink-0 border-t border-[#a0a0a0]" />
      <Terminal />
    </div>
  );
}
